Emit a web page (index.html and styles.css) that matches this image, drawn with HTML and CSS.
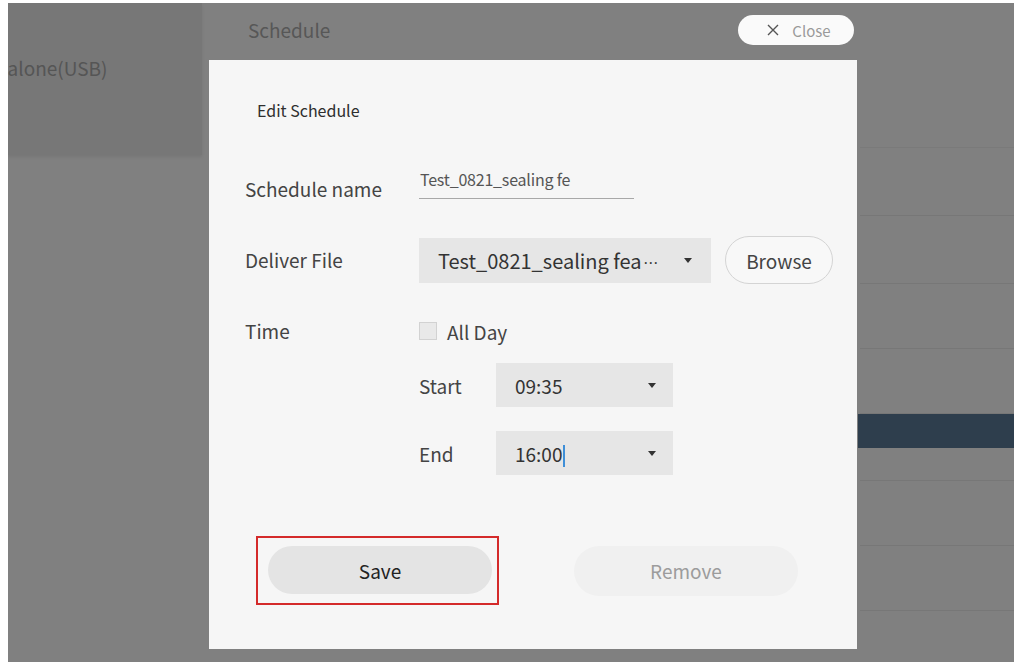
FILE: index.html
```html
<!DOCTYPE html>
<html lang="en">
<head>
<meta charset="utf-8">
<title>Schedule</title>
<link rel="stylesheet" href="styles.css">
</head>
<body>
<div class="app">
  <aside class="sidebar">
    <div class="device">
      <span class="device-name">Standalone(USB)</span>
    </div>
  </aside>
  <main class="main">
    <header class="main-header">Schedule</header>
    <div class="main-body">
      <ul class="list">
        <li class="row r-first"></li>
        <li class="row"></li>
        <li class="row"></li>
        <li class="row r-short"></li>
        <li class="row r-short"></li>
        <li class="row r-selected"></li>
        <li class="row r-thin"></li>
        <li class="row r-short"></li>
        <li class="row r-short"></li>
      </ul>
    </div>
  </main>

  <button class="close-btn" type="button">
    <svg class="close-icon" viewBox="0 0 12 12" width="12" height="12" aria-hidden="true">
      <path d="M1 1 L11 11 M11 1 L1 11" stroke="#555" stroke-width="1.4" fill="none"/>
    </svg>
    <span>Close</span>
  </button>

  <section class="dialog">
    <h2 class="dialog-title">Edit Schedule</h2>
    <div class="form">
      <div class="field f-name">
        <label class="label">Schedule name</label>
        <div class="name-input">Test_0821_sealing fe</div>
      </div>
      <div class="field f-file">
        <label class="label">Deliver File</label>
        <div class="file-control">
          <div class="select select-file">
            <span>Test_0821_sealing fea<span class="dots">···</span></span>
            <i class="caret"></i>
          </div>
          <button class="browse" type="button">Browse</button>
        </div>
      </div>
      <div class="field f-time">
        <label class="label">Time</label>
        <div class="time-control">
          <label class="check"><span class="box"></span>All Day</label>
          <div class="time-row t-start">
            <span class="sub-label">Start</span>
            <div class="select select-time"><span>09:35</span><i class="caret"></i></div>
          </div>
          <div class="time-row t-end">
            <span class="sub-label">End</span>
            <div class="select select-time"><span>16:00<b class="cursor"></b></span><i class="caret"></i></div>
          </div>
        </div>
      </div>
    </div>
    <div class="actions">
      <div class="highlight">
        <button class="btn btn-save" type="button">Save</button>
      </div>
      <button class="btn btn-remove" type="button">Remove</button>
    </div>
  </section>
</div>
</body>
</html>
```

FILE: styles.css
```css
* { box-sizing: border-box; }

html, body {
  margin: 0;
  padding: 0;
  background: #ffffff;
}

body {
  font-family: "Noto Sans CJK SC", "Noto Sans", sans-serif;
  color: #3c3c3c;
}

.app {
  position: relative;
  margin: 3px 4px 0 8px;
  height: 659px;
  background: #808080;
  display: grid;
  grid-template-columns: 194px 1fr;
  overflow: hidden;
}

/* left column */
.sidebar {
  display: flex;
  flex-direction: column;
}

.device {
  height: 152px;
  background: #777777;
  overflow: hidden;
  padding-top: 52px;
  box-shadow: 0 2px 3px rgba(0, 0, 0, 0.08);
}

.device-name {
  display: block;
  margin-left: -52px;
  font-size: 19px;
  line-height: 26px;
  color: #555555;
  white-space: nowrap;
}

/* main area behind the dialog */
.main {
  display: grid;
  grid-template-rows: 57px 1fr;
}

.main-header {
  padding: 14px 0 0 46px;
  font-size: 19px;
  line-height: 26px;
  color: #575757;
}

.main-body {
  display: flex;
  justify-content: flex-end;
}

.list {
  list-style: none;
  margin: 0;
  padding: 0;
  width: 154px;
}

.row {
  height: 68px;
  border-bottom: 1px solid #777777;
}

.row.r-first { height: 88px; border-bottom-color: #7a7a7a; }
.row.r-short { height: 65px; }
.row.r-selected {
  height: 34px;
  background: #2e3e4d;
  border-bottom: 0;
  margin-left: -2px;
}
.row.r-thin { height: 33px; }

/* close pill */
.close-btn {
  position: absolute;
  left: 730px;
  top: 12px;
  width: 116px;
  height: 30px;
  border: 0;
  border-radius: 15px;
  background: #fafafa;
  display: flex;
  align-items: center;
  justify-content: center;
  gap: 13px;
  padding: 0 0 0 6px;
  font-family: inherit;
  font-size: 15px;
  color: #9a9a9a;
}

.close-icon { display: block; }

/* dialog */
.dialog {
  position: absolute;
  left: 201px;
  top: 57px;
  width: 648px;
  height: 589px;
  background: #f6f6f6;
  padding: 38px 0 0 36px;
  display: flex;
  flex-direction: column;
}

.dialog-title {
  margin: 0 0 0 12px;
  font-size: 16px;
  line-height: 24px;
  font-weight: 400;
  color: #2e2e2e;
}

.form {
  margin-top: 42px;
  display: flex;
  flex-direction: column;
}

.field {
  display: grid;
  grid-template-columns: 174px 1fr;
}

.label {
  font-size: 19px;
  line-height: 26px;
  color: #444444;
}

.f-name .label { margin-top: 12px; margin-bottom: -3px; }

.name-input {
  width: 215px;
  height: 35px;
  padding: 4px 0 0 1px;
  border-bottom: 1px solid #a8a8a8;
  font-size: 16px;
  line-height: 22px;
  color: #555555;
  letter-spacing: -0.2px;
}

.f-file {
  margin-top: 37px;
  align-items: center;
}

.file-control {
  display: flex;
  align-items: center;
  gap: 14px;
}

.select {
  display: flex;
  align-items: center;
  justify-content: space-between;
  background: #e6e6e6;
  color: #333333;
  font-size: 19px;
}

.select-file {
  width: 292px;
  height: 45px;
  padding: 0 19px 0 19px;
  font-size: 20px;
}

.dots {
  font-family: "Noto Sans", sans-serif;
  font-size: 15px;
  letter-spacing: 1px;
  margin-left: 2px;
  vertical-align: 1px;
}

.caret {
  width: 0;
  height: 0;
  border-left: 4px solid transparent;
  border-right: 4px solid transparent;
  border-top: 5px solid #333333;
}

.browse {
  width: 108px;
  height: 48px;
  border: 1px solid #d4d4d4;
  border-radius: 24px;
  background: #f8f8f8;
  font-family: inherit;
  font-size: 19px;
  color: #444444;
  padding: 0;
}

.f-time {
  margin-top: 35px;
}

.f-time .label { line-height: 24px; }

.time-control {
  display: flex;
  flex-direction: column;
}

.check {
  display: flex;
  align-items: center;
  gap: 10px;
  height: 24px;
  font-size: 19px;
  color: #444444;
}

.box {
  width: 18px;
  height: 18px;
  border: 1px solid #d2d2d2;
  background: #e9e9e9;
}

.time-row {
  display: flex;
  align-items: center;
}

.t-start { margin-top: 20px; }
.t-end { margin-top: 24px; }

.sub-label {
  width: 77px;
  font-size: 19px;
  color: #444444;
}

.select-time {
  width: 177px;
  height: 44px;
  padding: 0 17px 0 19px;
}

.cursor {
  display: inline-block;
  width: 2px;
  height: 22px;
  margin-left: 1px;
  vertical-align: -5px;
  background: #3f8fd8;
}

/* footer buttons */
.actions {
  margin-top: 61px;
  display: flex;
  align-items: center;
  gap: 75px;
  padding-left: 11px;
}

.highlight {
  border: 2px solid #d42a2a;
  padding: 8px 5px 9px 10px;
}

.btn {
  display: block;
  width: 224px;
  height: 48px;
  border: 0;
  border-radius: 24px;
  font-family: inherit;
  font-size: 19px;
  padding: 0;
}

.btn-save {
  background: #e4e4e4;
  color: #222222;
}

.btn-remove {
  background: #f0f0f0;
  color: #9c9c9c;
  height: 50px;
  border-radius: 25px;
}
```
